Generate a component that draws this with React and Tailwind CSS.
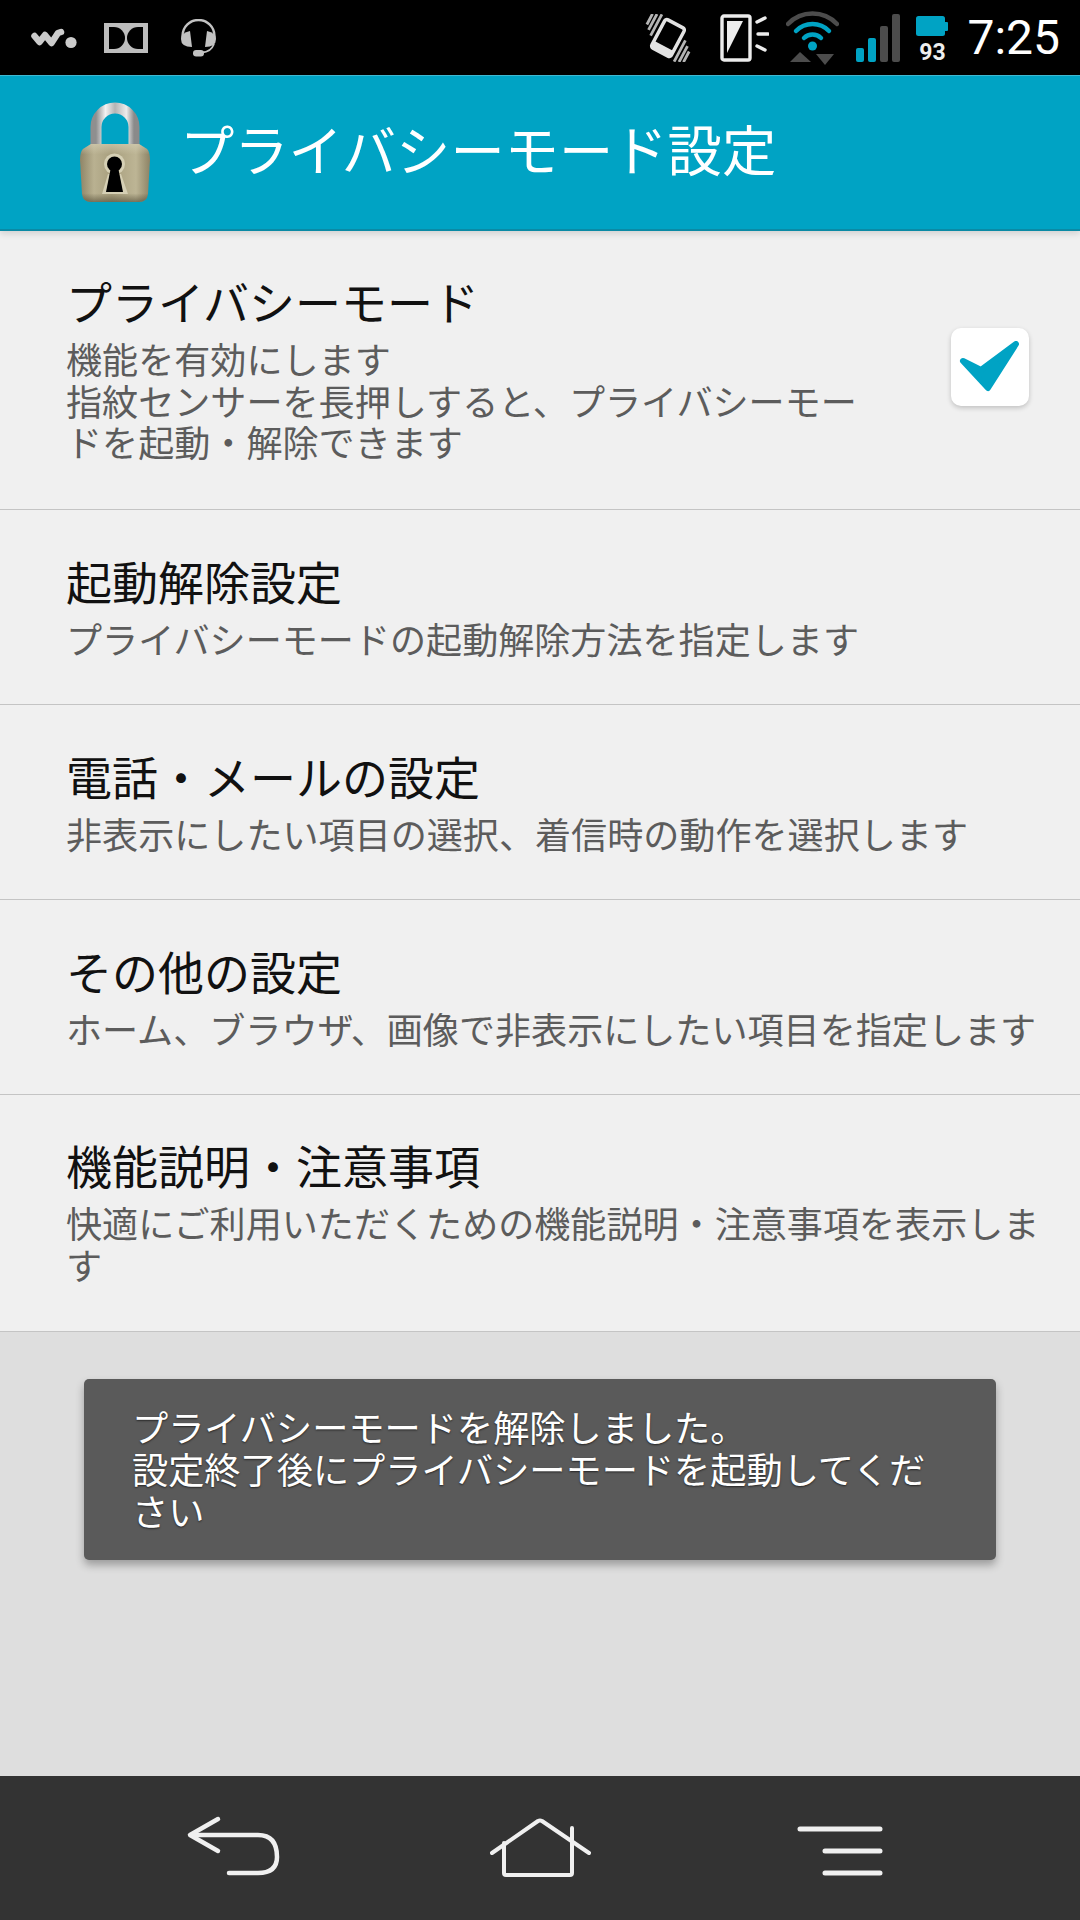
const jp = 'font-["Noto_Sans_CJK_JP","Noto_Sans_CJK_SC",sans-serif]';

function Walkman() {
  return (
    <svg width="46" height="22" viewBox="0 0 46 22">
      <path d="M3.5 9 L8.5 15 L14 8 L20.5 16 L27 6 L30 5" fill="none" stroke="#cbcbcb" strokeWidth="6.5" strokeLinecap="round" strokeLinejoin="round" />
      <circle cx="40" cy="15.5" r="5.6" fill="#cbcbcb" />
    </svg>
  );
}
function Dolby() {
  return (
    <svg width="44" height="30" viewBox="0 0 44 30">
      <rect width="44" height="30" fill="#bdbdbd" />
      <path d="M5 4h5a11 11 0 0 1 0 22H5z" fill="#000" />
      <path d="M39 4h-5a11 11 0 0 0 0 22h5z" fill="#000" />
    </svg>
  );
}
function Headset() {
  return (
    <svg width="37" height="38" viewBox="0 0 37 38">
      <path d="M2.5 20 V17 A16 16 0 0 1 34.5 17 V20" fill="none" stroke="#c2c2c2" strokeWidth="2.4" />
      <path d="M1 20 Q1 14 10 12 L12 28 Q1 28 1 20z" fill="#c2c2c2" />
      <path d="M36 20 Q36 14 27 12 L25 28 Q36 28 36 20z" fill="#c2c2c2" />
      <path d="M34 25 Q31 33 22 33.5" fill="none" stroke="#c2c2c2" strokeWidth="1.8" />
      <rect x="13" y="31" width="11" height="6.5" rx="3.2" fill="#c2c2c2" />
    </svg>
  );
}
function Vibrate() {
  return (
    <svg width="52" height="48" viewBox="0 0 52 48">
      <g transform="rotate(28 26 24)">
        <rect x="15" y="8" width="22" height="32" rx="2.5" fill="none" stroke="#e2e2e2" strokeWidth="3.5" />
        <rect x="15" y="33" width="22" height="7" fill="#e2e2e2" />
        <g stroke="#b4b4b4" strokeWidth="2.8" fill="none">
          <path d="M9.5 6V30M5 8V26M1 10V22M42.5 18V42M47 22V40M51 26V38" />
        </g>
      </g>
    </svg>
  );
}
function Brightness() {
  return (
    <svg width="49" height="48" viewBox="0 0 49 48">
      <rect x="2" y="2" width="28" height="44" rx="2" fill="none" stroke="#ececec" strokeWidth="3.4" />
      <path d="M7 7H23L7 39z" fill="#ececec" />
      <path d="M37 8L45 4M38 20H48M37 32L45 36" stroke="#ececec" strokeWidth="3.4" strokeLinecap="round" />
    </svg>
  );
}
function Wifi() {
  return (
    <svg width="53" height="54" viewBox="0 0 53 54">
      <path d="M2 13A34 34 0 0 1 51 13" fill="none" stroke="#4c4c4c" strokeWidth="4.5" strokeLinecap="round" />
      <path d="M10 20A23 23 0 0 1 43 20" fill="none" stroke="#00a3c4" strokeWidth="4.5" strokeLinecap="round" />
      <path d="M18 27A12 12 0 0 1 35 27" fill="none" stroke="#00a3c4" strokeWidth="4.5" strokeLinecap="round" />
      <circle cx="26.5" cy="35" r="4.5" fill="#00a3c4" />
      <path d="M4 51L14 41L25 51z" fill="#4c4c4c" />
      <path d="M30 43H48L39 54z" fill="#4c4c4c" />
    </svg>
  );
}
function Signal() {
  return (
    <svg width="44" height="48" viewBox="0 0 44 48">
      <rect x="0" y="34" width="8" height="14" rx="2" fill="#00a3c4" />
      <rect x="12" y="24" width="8" height="24" rx="2" fill="#00a3c4" />
      <rect x="24" y="12" width="8" height="36" rx="2" fill="#4c4c4c" />
      <rect x="36" y="0" width="8" height="48" rx="2" fill="#4c4c4c" />
    </svg>
  );
}
function Battery() {
  return (
    <svg width="32" height="20" viewBox="0 0 32 20">
      <rect x="0" y="0" width="29" height="20" rx="2.5" fill="#00a3c4" />
      <rect x="28" y="6" width="4" height="9" rx="1" fill="#00a3c4" />
    </svg>
  );
}
function Lock() {
  return (
    <svg width="72" height="102" viewBox="0 0 72 102">
      <defs>
        <linearGradient id="sh" x1="0" y1="0" x2="1" y2="0">
          <stop offset="0" stopColor="#8f8f8f" />
          <stop offset="0.25" stopColor="#f2f2f2" />
          <stop offset="0.5" stopColor="#b4b4b4" />
          <stop offset="0.8" stopColor="#ececec" />
          <stop offset="1" stopColor="#8a8a8a" />
        </linearGradient>
        <linearGradient id="bd" x1="0" y1="0" x2="1" y2="0">
          <stop offset="0" stopColor="#8f8567" />
          <stop offset="0.2" stopColor="#b9b191" />
          <stop offset="0.45" stopColor="#a89f7e" />
          <stop offset="0.8" stopColor="#bdb595" />
          <stop offset="1" stopColor="#8d8365" />
        </linearGradient>
        <linearGradient id="bv" x1="0" y1="0" x2="0" y2="1">
          <stop offset="0" stopColor="#d7d1b6" stopOpacity="0.6" />
          <stop offset="0.18" stopColor="#d7d1b6" stopOpacity="0" />
          <stop offset="0.85" stopColor="#4d4732" stopOpacity="0" />
          <stop offset="1" stopColor="#4d4732" stopOpacity="0.6" />
        </linearGradient>
      </defs>
      <path d="M17 44V25A19 19 0 0 1 55 25V44" fill="none" stroke="url(#sh)" strokeWidth="11" />
      <path d="M12 42H60L68 47Q71 50 71 58L69 92Q68 100 60 100H12Q4 100 3 92L1 58Q1 50 4 47z" fill="url(#bd)" />
      <path d="M12 42H60L68 47Q71 50 71 58L69 92Q68 100 60 100H12Q4 100 3 92L1 58Q1 50 4 47z" fill="url(#bv)" />
      <circle cx="35.5" cy="62" r="10.5" fill="#d5cfb4" />
      <path d="M23 92L29 72H42L49 92z" fill="#d5cfb4" />
      <circle cx="35.5" cy="62" r="7.5" fill="#000" />
      <path d="M32 65H39L44 90H27z" fill="#000" />
    </svg>
  );
}

function Row({ title, sub, children, className = "" }) {
  return (
    <div className={"flex items-center border-b border-[#c4c4c4] pl-[66px] " + className}>
      <div className="flex-1 min-w-0">
        <div className="text-[46px] leading-[60px] text-[#111]">{title}</div>
        <div className="text-[36.1px] leading-[41.5px] text-[#5c5c5c] mt-[8px]">{sub}</div>
      </div>
      {children}
    </div>
  );
}

export default function App() {
  return (
    <div className={"w-[1080px] h-[1920px] flex flex-col bg-[#dedede] overflow-hidden " + jp}>
      <div className="h-[75px] bg-black flex items-center pl-[31px] pr-[20px]">
        <Walkman />
        <div className="ml-[27px]"><Dolby /></div>
        <div className="ml-[32px]"><Headset /></div>
        <div className="ml-auto"><Vibrate /></div>
        <div className="ml-[26px]"><Brightness /></div>
        <div className="ml-[17px]"><Wifi /></div>
        <div className="ml-[17px]"><Signal /></div>
        <div className="ml-[16px] flex flex-col items-start w-[32px] self-start pt-[16px]">
          <Battery />
          <div className="font-['Roboto',sans-serif] font-bold text-[23px] leading-[24px] text-[#eee] mt-[5px] self-center">93</div>
        </div>
        <div className="ml-[19px] font-['Roboto',sans-serif] font-normal text-[48px] leading-none text-white">7:25</div>
      </div>
      <div className="h-[156px] bg-[#00a3c4] border-t border-[#3fb9d2] border-b-2 border-b-[#0a8aa5] flex items-center pl-[79px] shadow-[0_3px_6px_rgba(0,0,0,0.12)] z-10">
        <div className="pt-[1px]"><Lock /></div>
        <div className="ml-[29px] pb-[8px] text-[54.3px] leading-none text-white">プライバシーモード設定</div>
      </div>
      <div className="bg-[#f0f0f0]">
        <Row
          className="h-[279px] pb-[7px]"
          title="プライバシーモード"
          sub={<>機能を有効にします<br />指紋センサーを長押しすると、プライバシーモー<br />ドを起動・解除できます</>}
        >
          <div className="w-[78px] h-[78px] mr-[51px] rounded-[10px] bg-white shadow-[0_2px_5px_rgba(0,0,0,0.2)] flex items-center justify-center">
            <svg width="62" height="52" viewBox="0 0 62 52">
              <path d="M4 20L22 29L57 3L29 47z" fill="#00a3c4" stroke="#00a3c4" strokeWidth="6" strokeLinejoin="round" />
            </svg>
          </div>
        </Row>
        <Row className="h-[195px] pb-[5px]" title="起動解除設定" sub="プライバシーモードの起動解除方法を指定します" />
        <Row className="h-[195px] pb-[5px]" title="電話・メールの設定" sub="非表示にしたい項目の選択、着信時の動作を選択します" />
        <Row className="h-[195px] pb-[5px]" title="その他の設定" sub="ホーム、ブラウザ、画像で非表示にしたい項目を指定します" />
        <Row
          className="h-[237px] pb-[7px] pr-[38px]"
          title="機能説明・注意事項"
          sub="快適にご利用いただくための機能説明・注意事項を表示します"
        />
      </div>
      <div className="flex-1 pt-[47px]">
        <div className="mx-[84px] h-[181px] rounded-[5px] bg-[#5a5a5a] shadow-[0_5px_8px_rgba(0,0,0,0.3)] pl-[48px] pr-[58px] pt-[26px] text-[36.2px] leading-[42px] text-white [text-shadow:0_1px_2px_rgba(0,0,0,0.6)]">
          プライバシーモードを解除しました。<br />設定終了後にプライバシーモードを起動してください
        </div>
      </div>
      <div className="h-[144px] bg-[#333] flex items-start relative">
        <svg width="1080" height="144" viewBox="0 0 1080 144" fill="none" stroke="#f0f0f0" strokeLinecap="round" strokeLinejoin="round">
          <path d="M218 43L190 59L218 75" strokeWidth="4.5" />
          <path d="M191 59H258Q277 59 277 81Q277 97 258 97H229" strokeWidth="4.5" />
          <path d="M492 77L538 45Q540 44 542 45L589 77" strokeWidth="4" />
          <path d="M504 67V97Q504 99 506 99H570Q572 99 572 97V52" strokeWidth="4" />
          <path d="M800 53H880M825 75H880M825 97H880" strokeWidth="5" />
        </svg>
      </div>
    </div>
  );
}
